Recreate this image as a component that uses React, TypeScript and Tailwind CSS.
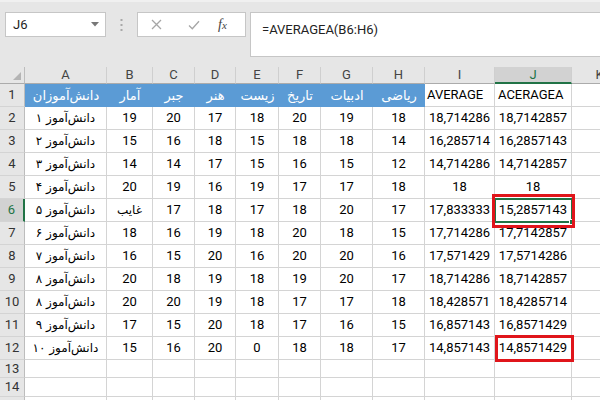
import React from "react";

const FA = "font-['DejaVu_Sans',sans-serif]";

type Row = { n: number; label: string; v: string[]; avg: string; avga: string };

const rows: Row[] = [
  { n: 2, label: "۱", v: ["19", "20", "17", "18", "20", "19", "18"], avg: "18,714286", avga: "18,7142857" },
  { n: 3, label: "۲", v: ["15", "16", "18", "15", "18", "18", "14"], avg: "16,285714", avga: "16,2857143" },
  { n: 4, label: "۳", v: ["14", "14", "17", "15", "16", "15", "12"], avg: "14,714286", avga: "14,7142857" },
  { n: 5, label: "۴", v: ["20", "19", "16", "19", "17", "17", "18"], avg: "18", avga: "18" },
  { n: 6, label: "۵", v: ["غایب", "17", "18", "17", "18", "20", "17"], avg: "17,833333", avga: "15,2857143" },
  { n: 7, label: "۶", v: ["18", "16", "19", "18", "20", "18", "15"], avg: "17,714286", avga: "17,7142857" },
  { n: 8, label: "۷", v: ["16", "15", "20", "16", "20", "20", "16"], avg: "17,571429", avga: "17,5714286" },
  { n: 9, label: "۸", v: ["20", "18", "19", "18", "19", "20", "17"], avg: "18,714286", avga: "18,7142857" },
  { n: 10, label: "۸", v: ["20", "20", "19", "18", "17", "17", "18"], avg: "18,428571", avga: "18,4285714" },
  { n: 11, label: "۹", v: ["17", "15", "20", "18", "17", "16", "15"], avg: "16,857143", avga: "16,8571429" },
  { n: 12, label: "۱۰", v: ["15", "16", "20", "0", "18", "18", "17"], avga: "14,8571429", avg: "14,857143" },
];

const letters = ["A", "B", "C", "D", "E", "F", "G", "H", "I", "J", "K"];
const heads = ["دانش\u200cآموزان", "آمار", "جبر", "هنر", "زیست", "تاریخ", "ادبیات", "ریاضی"];

function C({ children, className = "" }: { children?: React.ReactNode; className?: string }) {
  return (
    <div className={`flex items-center justify-center border-r border-b border-[#d4d4d4] overflow-hidden whitespace-nowrap ${className}`}>
      {children}
    </div>
  );
}

function RH({ children, sel = false }: { children?: React.ReactNode; sel?: boolean }) {
  return (
    <div
      className={`flex items-center justify-center border-b border-[#d4d4d4] text-[13px] ${
        sel ? "bg-[#d2d2d2] text-[#217346] border-r-2 border-r-[#217346]" : "bg-[#e6e6e6] text-[#333] border-r border-r-[#bdbdbd]"
      }`}
    >
      {children}
    </div>
  );
}

export default function App() {
  return (
    <div className="w-[600px] h-[400px] overflow-hidden bg-white font-['Roboto',sans-serif] text-black">
      {/* top bar */}
      <div className="h-[67px] bg-[#e6e6e6] border-t-2 border-t-[#f0f0f0] flex items-start pt-[10px]">
        <div className="ml-[5px] w-[101px] h-[25px] bg-white border border-[#c6c6c6] flex items-center justify-between pl-[7px] pr-[6px]">
          <span className="text-[13px] text-[#222]">J6</span>
          <svg width="8" height="5" viewBox="0 0 8 5"><path d="M0 0H8L4 4.5Z" fill="#777" /></svg>
        </div>
        <div className="w-[31px] h-[25px] flex items-center justify-center">
          <svg width="3" height="12" viewBox="0 0 3 12">
            <rect x="0.5" y="0" width="2" height="2" fill="#a8a8a8" />
            <rect x="0.5" y="5" width="2" height="2" fill="#a8a8a8" />
            <rect x="0.5" y="10" width="2" height="2" fill="#a8a8a8" />
          </svg>
        </div>
        <div className="w-[109px] h-[25px] bg-white border border-[#c6c6c6] flex items-center">
          <svg className="ml-[13px]" width="11" height="11" viewBox="0 0 11 11">
            <path d="M1 1L10 10M10 1L1 10" stroke="#a6a6a6" strokeWidth="1.3" />
          </svg>
          <svg className="ml-[26px]" width="12" height="10" viewBox="0 0 12 10">
            <path d="M1 5.5L4.3 8.8L11 1.2" stroke="#a6a6a6" strokeWidth="1.3" fill="none" />
          </svg>
          <span className="ml-[18px] font-['Liberation_Serif',serif] italic text-[14px] text-[#444] leading-none">
            f<span className="text-[11px]">x</span>
          </span>
        </div>
        <div className="ml-[4px] flex-1 h-[45px] bg-white border border-[#c6c6c6] border-r-0 pl-[11px] pt-[4px]">
          <span className="text-[13px] text-[#222]">=AVERAGEA(B6:H6)</span>
        </div>
      </div>

      {/* sheet */}
      <div className="relative grid grid-cols-[25px_82px_46px_42px_41px_43px_42px_52px_52px_70px_77px_56px] grid-rows-[17px_repeat(12,23px)_18px_19px_23px] text-[13px]">
        {/* column header row */}
        <div className="relative bg-[#e6e6e6] border-r border-b border-r-[#bdbdbd] border-b-[#ababab]">
          <svg className="absolute right-[3px] bottom-[3px]" width="8" height="8" viewBox="0 0 8 8">
            <path d="M8 0V8H0Z" fill="#b4b4b4" />
          </svg>
        </div>
        {letters.map((l) => (
          <div
            key={l}
            className={`flex items-center justify-center border-r border-r-[#cfcfcf] ${
              l === "J"
                ? "bg-[#d2d2d2] text-[#217346] border-b-2 border-b-[#217346]"
                : "bg-[#e6e6e6] text-[#444] border-b border-b-[#ababab]"
            }`}
          >
            {l}
          </div>
        ))}

        {/* row 1 */}
        <RH>1</RH>
        {heads.map((h, i) => (
          <div
            key={i}
            dir="rtl"
            className={`flex items-center justify-center bg-[#5b9bd5] text-white text-[13px] ${FA}`}
          >
            {h}
          </div>
        ))}
        <C className="justify-start pl-[2px]">AVERAGE</C>
        <C className="justify-start pl-[3px]">ACERAGEA</C>
        <C />

        {rows.map((r) => (
          <React.Fragment key={r.n}>
            <RH sel={r.n === 6}>{r.n}</RH>
            <C className={`text-[12px] ${FA}`}>
              <span dir="rtl">{"دانش\u200cآموز " + r.label}</span>
            </C>
            {r.v.map((x, i) => (
              <C key={i} className={x === "غایب" ? `text-[12px] ${FA}` : ""}>
                {x}
              </C>
            ))}
            <C>{r.avg}</C>
            <C>{r.avga}</C>
            <C />
          </React.Fragment>
        ))}

        {[13, 14, 15].map((n) => (
          <React.Fragment key={n}>
            <RH>{n === 15 ? "" : n}</RH>
            {letters.map((l) => (
              <C key={l} />
            ))}
          </React.Fragment>
        ))}

        {/* selection J6 */}
        <div className="absolute left-[494px] top-[131px] w-[79px] h-[25px] border-2 border-[#217346]" />
        <div className="absolute left-[569px] top-[152px] w-[6px] h-[6px] bg-[#217346] border border-white" />
        {/* red boxes */}
        <div className="absolute left-[492px] top-[127px] w-[83px] h-[34px] border-[3px] border-[#e0151b]" />
        <div className="absolute left-[495px] top-[268px] w-[79px] h-[27px] border-[3px] border-[#e0151b]" />
      </div>
    </div>
  );
}
